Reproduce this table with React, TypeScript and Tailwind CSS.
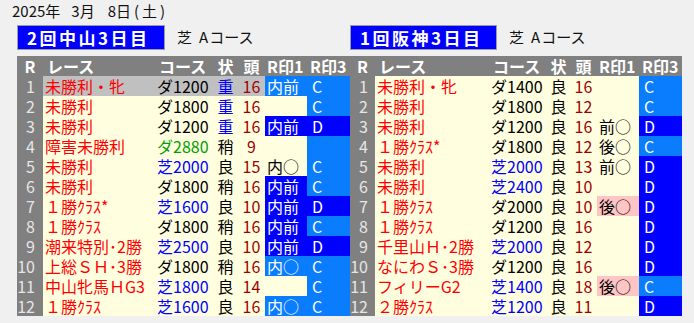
import React from "react";

type M1 = "" | "deep" | "light" | "plain" | "pink";
type Row = {
  n: number;
  race: string;
  course: string;
  cc: string;
  st: string;
  stc: string;
  heads: string;
  m1: string;
  m1s: M1;
  m3: string;
  m3s: "light" | "deep";
  hl?: boolean;
};

const BLK = "text-[#000000]";
const BLU = "text-[#0000ff]";
const GRN = "text-[#00a000]";

const left: Row[] = [
  { n: 1, race: "未勝利・牝", course: "ダ1200", cc: BLK, st: "重", stc: BLU, heads: "16", m1: "内前", m1s: "light", m3: "C", m3s: "light", hl: true },
  { n: 2, race: "未勝利", course: "ダ1800", cc: BLK, st: "重", stc: BLU, heads: "16", m1: "", m1s: "", m3: "C", m3s: "light" },
  { n: 3, race: "未勝利", course: "ダ1200", cc: BLK, st: "重", stc: BLU, heads: "16", m1: "内前", m1s: "deep", m3: "D", m3s: "deep" },
  { n: 4, race: "障害未勝利", course: "ダ2880", cc: GRN, st: "稍", stc: BLK, heads: "9", m1: "", m1s: "", m3: "", m3s: "light" },
  { n: 5, race: "未勝利", course: "芝2000", cc: BLU, st: "良", stc: BLK, heads: "15", m1: "内○", m1s: "plain", m3: "C", m3s: "light" },
  { n: 6, race: "未勝利", course: "ダ1800", cc: BLK, st: "稍", stc: BLK, heads: "16", m1: "内前", m1s: "deep", m3: "C", m3s: "light" },
  { n: 7, race: "１勝ｸﾗｽ*", course: "芝1600", cc: BLU, st: "良", stc: BLK, heads: "10", m1: "内前", m1s: "deep", m3: "D", m3s: "deep" },
  { n: 8, race: "１勝ｸﾗｽ", course: "ダ1800", cc: BLK, st: "稍", stc: BLK, heads: "16", m1: "内前", m1s: "deep", m3: "C", m3s: "light" },
  { n: 9, race: "潮来特別･2勝", course: "芝2500", cc: BLU, st: "良", stc: BLK, heads: "10", m1: "内前", m1s: "deep", m3: "D", m3s: "deep" },
  { n: 10, race: "上総ＳＨ･3勝", course: "ダ1800", cc: BLK, st: "稍", stc: BLK, heads: "16", m1: "内○", m1s: "light", m3: "C", m3s: "light" },
  { n: 11, race: "中山牝馬ＨG3", course: "芝1800", cc: BLU, st: "良", stc: BLK, heads: "14", m1: "", m1s: "", m3: "C", m3s: "light" },
  { n: 12, race: "１勝ｸﾗｽ", course: "芝1600", cc: BLU, st: "良", stc: BLK, heads: "16", m1: "内○", m1s: "light", m3: "C", m3s: "light" },
];

const right: Row[] = [
  { n: 1, race: "未勝利・牝", course: "ダ1400", cc: BLK, st: "良", stc: BLK, heads: "16", m1: "", m1s: "", m3: "C", m3s: "light" },
  { n: 2, race: "未勝利", course: "ダ1800", cc: BLK, st: "良", stc: BLK, heads: "12", m1: "", m1s: "", m3: "C", m3s: "light" },
  { n: 3, race: "未勝利", course: "ダ1200", cc: BLK, st: "良", stc: BLK, heads: "16", m1: "前○", m1s: "plain", m3: "D", m3s: "deep" },
  { n: 4, race: "１勝ｸﾗｽ*", course: "ダ1800", cc: BLK, st: "良", stc: BLK, heads: "12", m1: "後○", m1s: "plain", m3: "C", m3s: "light" },
  { n: 5, race: "未勝利", course: "芝2000", cc: BLU, st: "良", stc: BLK, heads: "13", m1: "前○", m1s: "plain", m3: "D", m3s: "deep" },
  { n: 6, race: "未勝利", course: "芝2400", cc: BLU, st: "良", stc: BLK, heads: "10", m1: "", m1s: "", m3: "D", m3s: "deep" },
  { n: 7, race: "１勝ｸﾗｽ", course: "ダ2000", cc: BLK, st: "良", stc: BLK, heads: "10", m1: "後○", m1s: "pink", m3: "D", m3s: "deep" },
  { n: 8, race: "１勝ｸﾗｽ", course: "ダ1200", cc: BLK, st: "良", stc: BLK, heads: "16", m1: "", m1s: "", m3: "D", m3s: "deep" },
  { n: 9, race: "千里山Ｈ･2勝", course: "芝2000", cc: BLU, st: "良", stc: BLK, heads: "12", m1: "", m1s: "", m3: "D", m3s: "deep" },
  { n: 10, race: "なにわＳ･3勝", course: "ダ1200", cc: BLK, st: "良", stc: BLK, heads: "16", m1: "", m1s: "", m3: "D", m3s: "deep" },
  { n: 11, race: "フィリーG2", course: "芝1400", cc: BLU, st: "良", stc: BLK, heads: "18", m1: "後○", m1s: "pink", m3: "C", m3s: "light" },
  { n: 12, race: "２勝ｸﾗｽ", course: "芝1200", cc: BLU, st: "良", stc: BLK, heads: "11", m1: "", m1s: "", m3: "D", m3s: "deep" },
];

type Widths = { r: string; race: string; course: string; st: string; hd: string; m1: string; m3: string };

const LW: Widths = { r: "w-[26px]", race: "w-[113px]", course: "w-[57px]", st: "w-[25px]", hd: "w-[27px]", m1: "w-[42px]", m3: "w-[43px]" };
const RW: Widths = { r: "w-[25px]", race: "w-[115px]", course: "w-[57px]", st: "w-[23px]", hd: "w-[27px]", m1: "w-[42px]", m3: "w-[43px]" };

function m1Class(s: M1): string {
  switch (s) {
    case "deep":
      return "bg-[#0000ff] text-white";
    case "light":
      return "bg-[#0a7dff] text-white";
    case "pink":
      return "bg-[#ffc4c4] text-black";
    case "plain":
      return "text-black";
    default:
      return "";
  }
}

function Table({ rows, w, rpad }: { rows: Row[]; w: Widths; rpad: string }) {
  return (
    <div className="flex flex-col">
      <div className="flex h-[20px] bg-[#808080] text-white font-bold leading-[20px]">
        <div className={`${w.r} text-center`}>R</div>
        <div className={`${w.race} pl-[4px]`}>レース</div>
        <div className={`${w.course} pl-[3px]`}>コース</div>
        <div className={`${w.st} text-center`}>状</div>
        <div className={`${w.hd} text-center`}>頭</div>
        <div className={`${w.m1} pl-[2px] whitespace-nowrap`}>R印1</div>
        <div className={`${w.m3} pl-[3px] whitespace-nowrap`}>R印3</div>
      </div>
      {rows.map((r) => (
        <div key={r.n} className="flex h-[20px] leading-[20px] bg-[#ffffe0]">
          <div className={`${w.r} ${rpad} bg-[#808080] text-[#e6e6e6] text-right`}>{r.n}</div>
          <div className={`flex ${r.hl ? "bg-[#c0c0c0]" : ""}`}>
            <div className={`${w.race} pl-[2px] text-[#ff0000] whitespace-nowrap`}>{r.race}</div>
            <div className={`${w.course} pl-[1px] ${r.cc} whitespace-nowrap`}>{r.course}</div>
            <div className={`${w.st} text-center ${r.stc}`}>{r.st}</div>
            <div className={`${w.hd} text-center text-[#a00000]`}>{r.heads}</div>
          </div>
          <div className={`${w.m1} pl-[2px] whitespace-nowrap ${m1Class(r.m1s)}`}>{r.m1}</div>
          <div className={`${w.m3} pl-[5px] text-white ${r.m3s === "deep" ? "bg-[#0000ff]" : "bg-[#0a7dff]"}`}>{r.m3}</div>
        </div>
      ))}
    </div>
  );
}

function DayHeader({ title, wbox, pad }: { title: string; wbox: string; pad: string }) {
  return (
    <div className="flex items-center h-[25px]">
      <div className={`${wbox} h-[25px] bg-[#0000ff] border border-[#9a9aa8] text-white font-bold text-[17px] leading-[23px] tracking-[2.5px] ${pad} whitespace-nowrap`}>
        {title}
      </div>
      <div className="ml-[12px] flex text-[15px] text-[#111] whitespace-nowrap">
        <span>芝</span>
        <span className="ml-[7px]">A</span>
        <span className="ml-[1px]">コース</span>
      </div>
    </div>
  );
}

export default function App() {
  return (
    <div className="w-[694px] h-[323px] bg-[#f0f0f0] overflow-hidden font-['Noto_Sans_CJK_JP',sans-serif] text-[16px]">
      <div className="h-[25px] pl-[12px] pt-[1px] flex text-[15px] leading-[20px] text-[#111] whitespace-nowrap">
        <span>2025年</span>
        <span className="ml-[11px]">3月</span>
        <span className="ml-[13px]">8日</span>
        <span className="ml-[3px]">(</span>
        <span className="ml-[3px]">土</span>
        <span className="ml-[3px]">)</span>
      </div>
      <div className="flex pl-[17px]">
        <div className="w-[333px]">
          <DayHeader title="2回中山3日目" wbox="w-[148px]" pad="pl-[9px]" />
        </div>
        <div className="w-[332px]">
          <DayHeader title="1回阪神3日目" wbox="w-[147px]" pad="pl-[9px]" />
        </div>
      </div>
      <div className="flex pl-[17px] mt-[6px]">
        <Table rows={left} w={LW} rpad="pr-[8px]" />
        <Table rows={right} w={RW} rpad="pr-[7px]" />
      </div>
    </div>
  );
}
